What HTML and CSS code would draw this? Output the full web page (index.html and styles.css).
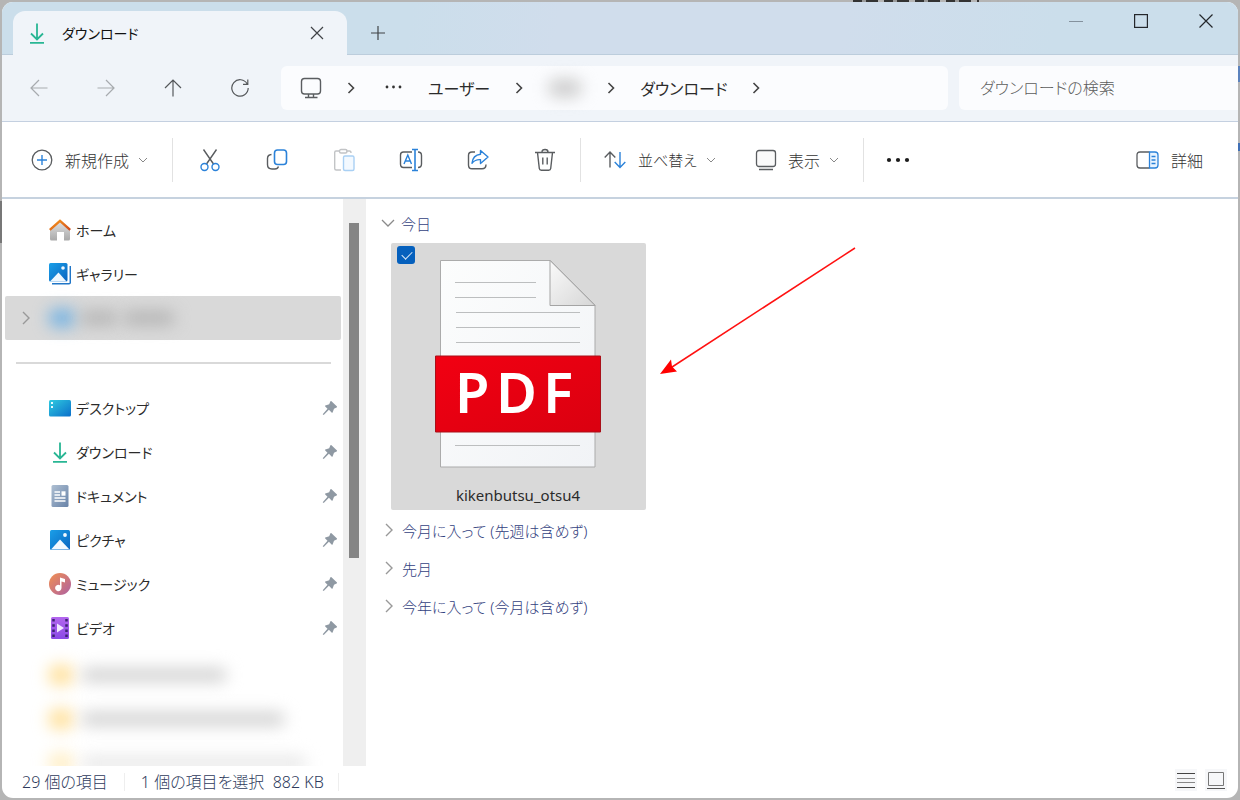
FILE: index.html
```html
<!DOCTYPE html>
<html lang="ja">
<head>
<meta charset="utf-8">
<meta name="viewport" content="width=device-width, initial-scale=1">
<title>ダウンロード</title>
<link rel="stylesheet" href="styles.css">
</head>
<body>
<svg class="defs" aria-hidden="true">
  <defs>
    <linearGradient id="g-green" x1="0" y1="0" x2="0" y2="1"><stop offset="0" stop-color="#22a699"/><stop offset="1" stop-color="#30c48d"/></linearGradient>
    <linearGradient id="g-blue" x1="0" y1="0" x2="1" y2="1"><stop offset="0" stop-color="#1a9fe8"/><stop offset="1" stop-color="#0a64c0"/></linearGradient>
    <linearGradient id="g-desk" x1="0" y1="0" x2="1" y2="1"><stop offset="0" stop-color="#2fcbe0"/><stop offset="1" stop-color="#0b6fca"/></linearGradient>
    <linearGradient id="g-house" x1="0" y1="0" x2="0" y2="1"><stop offset="0" stop-color="#e3e3e3"/><stop offset="1" stop-color="#a9a9a9"/></linearGradient>
    <linearGradient id="g-roof" x1="0" y1="0" x2="1" y2="1"><stop offset="0" stop-color="#f99a1c"/><stop offset="1" stop-color="#cf4a1c"/></linearGradient>
    <linearGradient id="g-doc" x1="0" y1="0" x2="1" y2="1"><stop offset="0" stop-color="#aebfd2"/><stop offset="1" stop-color="#6883a8"/></linearGradient>
    <linearGradient id="g-music" x1="0" y1="0" x2="1" y2="1"><stop offset="0" stop-color="#f29050"/><stop offset="1" stop-color="#ad60a3"/></linearGradient>
    <linearGradient id="g-video" x1="0" y1="0" x2="0" y2="1"><stop offset="0" stop-color="#b366ee"/><stop offset="1" stop-color="#8a4ae6"/></linearGradient>
    <linearGradient id="g-page" x1="0" y1="0" x2="1" y2="1"><stop offset="0" stop-color="#fcfdfd"/><stop offset="1" stop-color="#f1f3f6"/></linearGradient>
    <linearGradient id="g-fold" x1="0" y1="0" x2="1" y2="1"><stop offset="0" stop-color="#fafafa"/><stop offset="1" stop-color="#d6d6d6"/></linearGradient>
    <linearGradient id="g-red" x1="0" y1="0" x2="1" y2="1"><stop offset="0" stop-color="#f20012"/><stop offset="1" stop-color="#da0010"/></linearGradient>
  </defs>
  <symbol id="down" viewBox="0 0 10 6"><path d="M1 1l4 4 4-4" fill="none" stroke="currentColor"/></symbol>
  <symbol id="right" viewBox="0 0 8 14"><path d="M1 1l6 6-6 6" fill="none" stroke="currentColor" stroke-width="1.4"/></symbol>
  <symbol id="crumb" viewBox="0 0 10 12"><path d="M2.5 1l5 5-5 5" fill="none" stroke="currentColor" stroke-width="1.6"/></symbol>
  <symbol id="download" viewBox="0 0 22 22"><path d="M11 1.500V17M5 11.500l6 6 6-6M4 20.800h14" fill="none" stroke="#29b694" stroke-width="1.8"/></symbol>
  <symbol id="pin" viewBox="0 0 16 16"><path d="M9.200 1L15 6.500q.3.800-.5 1.100L12 8.700l-1.400 3.700q-.4.700-1 .1L6.900 9.800 1.700 15l-1-.8L5.500 8.700 3.200 6.400q-.5-.6.200-.9l3.800-1.200L8.300 1.400q.3-.7.900-.4z" fill="#8f99a3"/></symbol>
</svg>

<div class="window">
  <header class="titlebar">
    <div class="tab">
      <svg class="icon22" aria-hidden="true"><use href="#download"/></svg>
      <span class="tab-title">ダウンロード</span>
      <button class="plain tab-close" aria-label="タブを閉じる"><svg width="14" height="14" viewBox="0 0 14 14"><path d="M1 1l12 12M13 1L1 13" stroke="#404347" stroke-width="1.200"/></svg></button>
    </div>
    <button class="plain new-tab" aria-label="新しいタブ"><svg width="14" height="14" viewBox="0 0 14 14"><path d="M7 0v14M0 7h14" stroke="#404347" stroke-width="1.200"/></svg></button>
    <div class="caption">
      <button class="plain" aria-label="最小化"><svg width="14" height="14" viewBox="0 0 14 14"><path d="M0 7.500h14" stroke="#84919d"/></svg></button>
      <button class="plain" aria-label="最大化"><svg width="14" height="14" viewBox="0 0 14 14"><rect x=".6" y=".6" width="12.800" height="12.800" fill="none" stroke="#24272b" stroke-width="1.200"/></svg></button>
      <button class="plain" aria-label="閉じる"><svg width="14" height="14" viewBox="0 0 14 14"><path d="M.5.5l13 13M13.500.5l-13 13" stroke="#24272b" stroke-width="1.200"/></svg></button>
    </div>
  </header>

  <div class="address">
    <button class="plain go off" aria-label="戻る"><svg width="18" height="18" viewBox="0 0 18 18"><path d="M17.500 9H1M9 1L1 9l8 8"/></svg></button>
    <button class="plain go off" aria-label="進む"><svg width="18" height="18" viewBox="0 0 18 18"><path d="M.5 9H17M9 1l8 8-8 8"/></svg></button>
    <button class="plain go" aria-label="上へ"><svg width="18" height="18" viewBox="0 0 18 18"><path d="M9 17.500V1M1 9l8-8 8 8"/></svg></button>
    <button class="plain go" aria-label="更新"><svg width="18" height="18" viewBox="0 0 18 18"><path d="M16.200 5A8.200 8.200 0 1 0 17.200 9M16.800.5V5.300H12"/></svg></button>
    <nav class="crumbs" aria-label="パス">
      <svg width="22" height="22" viewBox="0 0 22 22" fill="none" stroke="#5a5d60" stroke-width="1.400"><rect x="1.500" y="1.500" width="19" height="15.500" rx="3"/><path d="M8.500 17v3M13.500 17v3M5 20.500h12.500"/></svg>
      <svg class="sep-c" aria-hidden="true"><use href="#crumb"/></svg>
      <svg width="24" height="6" viewBox="0 0 24 6" fill="#333"><circle cx="7" cy="2" r="1.400"/><circle cx="13.500" cy="2" r="1.400"/><circle cx="20" cy="2" r="1.400"/></svg>
      <a href="#">ユーザー</a>
      <svg class="sep-c" aria-hidden="true"><use href="#crumb"/></svg>
      <span class="blur-name"></span>
      <svg class="sep-c" aria-hidden="true"><use href="#crumb"/></svg>
      <a href="#">ダウンロード</a>
      <svg class="sep-c" aria-hidden="true"><use href="#crumb"/></svg>
    </nav>
    <input class="search" type="search" placeholder="ダウンロードの検索" aria-label="ダウンロードの検索">
  </div>

  <div class="toolbar">
    <button class="plain cmd"><svg width="22" height="22" viewBox="0 0 22 22" fill="none"><circle cx="11" cy="11" r="9.800" stroke="#5a5d60" stroke-width="1.300"/><path d="M11 6v10M6 11h10" stroke="#2b82d9" stroke-width="1.400"/></svg><span>新規作成</span><svg class="drop"><use href="#down"/></svg></button>
    <span class="rule"></span>
    <div class="tools">
      <button class="plain" aria-label="切り取り"><svg width="22" height="24" viewBox="0 0 22 24" fill="none" stroke-width="1.400"><path d="M4.500 1.500L14.500 16M17.500 1.500L7.500 16" stroke="#5a5d60"/><circle cx="5.500" cy="19" r="3.500" stroke="#2b82d9"/><circle cx="16.500" cy="19" r="3.500" stroke="#2b82d9"/></svg></button>
      <button class="plain" aria-label="コピー"><svg width="22" height="24" viewBox="0 0 22 24" fill="none" stroke-width="1.400"><path d="M5.500 6.500C3 6.700 1.500 8 1.500 10.500v6c0 3 1.500 4.500 4.500 4.500h3c2 0 3-1 3.500-2.500" stroke="#5a5d60"/><rect x="8.500" y="2" width="12" height="14.500" rx="3" stroke="#2b82d9" stroke-width="1.600"/></svg></button>
      <button class="plain" aria-label="貼り付け"><svg width="22" height="24" viewBox="0 0 22 24" fill="none" stroke-width="1.400"><path d="M7 3H3Q1.700 3 1.700 4.500v16q0 1.500 1.500 1.500H8M13 3h3.500Q18 3 18 5" stroke="#c2c4c6"/><rect x="6.500" y="1.500" width="7.500" height="3.500" rx="1.500" stroke="#c2c4c6"/><rect x="10.500" y="8" width="10.500" height="14.500" rx="1.500" fill="#f3f9ff" stroke="#a9d0f4"/></svg></button>
      <button class="plain" aria-label="名前の変更"><svg width="24" height="24" viewBox="0 0 24 24" fill="none" stroke-width="1.400"><path d="M13 4H4.500Q1.500 4 1.500 7v9q0 3.500 3 3.500H13M19 4q3.500 0 3.500 3.500v8.500q0 3.500-3.500 3.500" stroke="#5a5d60"/><path d="M16 1.500v21M13 1.500h6M13 22.500h6" stroke="#2b82d9" stroke-width="1.600"/><path d="M5 16L8.800 7l3.700 9M6.300 13h5" stroke="#2b82d9"/></svg></button>
      <button class="plain" aria-label="共有"><svg width="22" height="24" viewBox="0 0 22 24" fill="none" stroke-width="1.400"><path d="M8 4H5Q1.500 4 1.500 7.500v9.500q0 3.800 3.500 3.800h10q4 0 4-4.300" stroke="#5a5d60"/><path d="M13.500 2.500L21 9l-7.500 6.500v-3.800q-5-.5-8.500 3.500.800-8.200 8.500-9z" stroke="#2b82d9" stroke-linejoin="round"/></svg></button>
      <button class="plain" aria-label="削除"><svg width="22" height="24" viewBox="0 0 22 24" fill="none" stroke="#5a5d60" stroke-width="1.400"><path d="M1 4.500h20M8 4q0-2.500 3-2.500T14 4M3.500 4.500l1.800 16q.2 1.700 2 1.700h7.400q1.800 0 2-1.700l1.800-16M8.800 9.500v7M13.200 9.500v7"/></svg></button>
    </div>
    <span class="rule"></span>
    <button class="plain cmd sort"><svg width="22" height="20" viewBox="0 0 22 20" fill="none" stroke-width="1.400"><path d="M6 17.500V2M.7 7.500L6 2l5.300 5.500" stroke="#5a5d60"/><path d="M16 2v15.500M10.700 12l5.300 5.500L21.300 12" stroke="#2b82d9"/></svg><span>並べ替え</span><svg class="drop"><use href="#down"/></svg></button>
    <button class="plain cmd view"><svg width="22" height="22" viewBox="0 0 22 22" fill="none" stroke="#5a5d60" stroke-width="1.300"><rect x="1.500" y="1.500" width="19" height="16" rx="2.500" fill="#fafafa"/><path d="M4 20.500h14"/></svg><span>表示</span><svg class="drop"><use href="#down"/></svg></button>
    <span class="rule"></span>
    <button class="plain more" aria-label="その他"><svg width="24" height="6" viewBox="0 0 24 6" fill="#1c1c1c"><circle cx="3" cy="3" r="2.100"/><circle cx="12" cy="3" r="2.100"/><circle cx="21" cy="3" r="2.100"/></svg></button>
    <button class="plain cmd details"><svg width="23" height="18" viewBox="0 0 23 18" fill="none" stroke-width="1.300"><path d="M13.500 1H4Q1 1 1 4v10q0 3 3 3h9.500" stroke="#5a5d60"/><path d="M13.500 1H19q3 0 3 3v10q0 3-3 3h-5.500z" fill="#e9f4ff" stroke="#2b82d9"/><path d="M15.500 5.500h4M15.500 9h4M15.500 12.500h4" stroke="#2b82d9"/></svg><span>詳細</span></button>
  </div>

  <main class="main">
    <aside class="side">
      <nav class="tree" aria-label="ナビゲーション">
        <ul>
          <li><a href="#"><svg class="icon22" viewBox="0 0 22 22"><path d="M1 10.500L11 1.500l10 9V20q0 1.500-1.500 1.500H15V13H8v8.500H2.500Q1 21.500 1 20z" fill="url(#g-house)"/><path d="M.8 10.800L11 1.800l10.200 9" fill="none" stroke="url(#g-roof)" stroke-width="2.400"/></svg>ホーム</a></li>
          <li><a href="#"><svg class="icon22" viewBox="0 0 22 22"><path d="M3 20.800h17q1.300 0 1.300-1.300V3" fill="none" stroke="#2176c7" stroke-width="1.500"/><rect width="18.500" height="18.500" rx="1.500" fill="url(#g-blue)"/><path d="M1 18.500l8.500-9 8 9z" fill="#eff8ff"/><circle cx="14" cy="5" r="1.800" fill="#eff8ff"/></svg>ギャラリー</a></li>
          <li class="current"><a href="#" aria-label="アカウント"><svg class="expand" aria-hidden="true"><use href="#right"/></svg><span class="smudge cloud"></span><span class="smudge account"></span><span class="smudge account"></span></a></li>
        </ul>
        <hr>
        <ul class="pinned">
          <li><a href="#"><svg class="icon22" viewBox="0 0 22 22"><rect y="3" width="22" height="16.500" rx="1.500" fill="url(#g-desk)"/><path d="M2 5h2v2H2zM2 9h2v2H2z" fill="#e8fbff"/></svg>デスクトップ</a><svg class="pin"><use href="#pin"/></svg></li>
          <li><a href="#"><svg class="icon22"><use href="#download"/></svg>ダウンロード</a><svg class="pin"><use href="#pin"/></svg></li>
          <li><a href="#"><svg class="icon22" viewBox="0 0 22 22"><rect x="2.500" width="17" height="22" rx="1.500" fill="url(#g-doc)"/><path d="M5.500 7h5.500M5.500 10h5.500M5.500 13h11M5.500 16h11" stroke="#fff" stroke-width="1.400"/><path d="M12.500 6.300h4v4.400h-4z" fill="#fff"/></svg>ドキュメント</a><svg class="pin"><use href="#pin"/></svg></li>
          <li><a href="#"><svg class="icon22" viewBox="0 0 22 22"><rect x="1" y="1" width="20" height="20" rx="1.500" fill="url(#g-blue)"/><path d="M2 20.500l9-10 9.500 10z" fill="#f3f9ff"/><circle cx="16" cy="6" r="1.900" fill="#f3f9ff"/></svg>ピクチャ</a><svg class="pin"><use href="#pin"/></svg></li>
          <li><a href="#"><svg class="icon22" viewBox="0 0 22 22"><circle cx="11" cy="11" r="11" fill="url(#g-music)"/><path d="M11 4.500l5 1.500v3.500l-3.500-1V15a3.200 3.200 0 1 1-1.500-2.700z" fill="#fff"/></svg>ミュージック</a><svg class="pin"><use href="#pin"/></svg></li>
          <li><a href="#"><svg class="icon22" viewBox="0 0 22 22"><rect x="2" width="18" height="22" rx="1.500" fill="url(#g-video)"/><path d="M4.500 2v19M17.500 2v19" stroke="#3c2372" stroke-width="2.500" stroke-dasharray="2.500 2.700"/><path d="M8 6.500l7 4.500-7 4.500z" fill="#f1e8ff"/></svg>ビデオ</a><svg class="pin"><use href="#pin"/></svg></li>
        </ul>
        <ul class="recent" aria-hidden="true">
          <li><span class="smudge folder"></span><span class="smudge name name-1"></span></li>
          <li><span class="smudge folder"></span><span class="smudge name name-2"></span></li>
          <li><span class="smudge folder faint"></span><span class="smudge name name-3"></span></li>
        </ul>
      </nav>
      <div class="track"><div class="thumb"></div></div>
    </aside>

    <section class="files">
      <button class="plain group open"><svg width="14" height="9" viewBox="0 0 14 9"><path d="M1 1l6 6 6-6" fill="none" stroke="#8a8a8a" stroke-width="1.300"/></svg>今日</button>
      <div class="file">
        <input class="pick" type="checkbox" id="pick" checked>
        <label class="file-label" for="pick">
          <svg width="168" height="208" viewBox="0 0 168 208" aria-hidden="true">
            <path d="M6.500.5h110L161 45v162H6.500z" fill="url(#g-page)" stroke="#ababab"/>
            <path d="M116 .5V45.500h45z" fill="url(#g-fold)" stroke="#a4a4a4"/>
            <path d="M21 22.500h81M21 37.500h81M22 52.500h124M22 67.500h124M22 82.500h124M21 185.500h125" stroke="#bcbebf"/>
            <path d="M1.500 96h165v76H1.500z" fill="url(#g-red)" stroke="#a91019"/>
            <text class="pdf" x="21 62 109" y="153">PDF</text>
          </svg>
          <span>kikenbutsu_otsu4</span>
        </label>
      </div>
      <button class="plain group"><svg class="expand"><use href="#right"/></svg>今月に入って (先週は含めず)</button>
      <button class="plain group"><svg class="expand"><use href="#right"/></svg>先月</button>
      <button class="plain group"><svg class="expand"><use href="#right"/></svg>今年に入って (今月は含めず)</button>
      <svg class="arrow" width="198" height="132" viewBox="0 0 198 132" aria-hidden="true"><path d="M196 2L10 123" stroke="#f11" stroke-width="1.500"/><path d="M1 128L12 113.500l1 7 5 5z" fill="#f00"/></svg>
    </section>
  </main>

  <footer class="status">
    <span class="count">29 個の項目</span>
    <span class="picked">1 個の項目を選択&nbsp; 882 KB</span>
    <div class="modes">
      <button class="plain" aria-label="詳細表示"><svg width="18" height="18" viewBox="0 0 18 18" fill="none"><path d="M0 2.500h18M0 16.500h18" stroke="#444"/><path d="M0 7.500h18M0 11.500h18" stroke="#888"/></svg></button>
      <button class="plain" aria-label="大アイコン表示"><svg width="18" height="18" viewBox="0 0 18 18" fill="none"><path d="M1.500 1.500h15v13h-15z" stroke="#777"/><path d="M0 17.500h18" stroke="#555"/></svg></button>
    </div>
  </footer>
</div>
</body>
</html>
```
FILE: styles.css
```css
* { box-sizing: border-box; }

body {
  margin: 0;
  height: 100vh;
  padding: 2px;
  overflow: hidden;
  background:
    repeating-linear-gradient(90deg, #333 0 9px, #999 9px 13px, #333 13px 25px, #b5b5b5 25px 31px) 853px 0 / 126px 2px no-repeat,
    linear-gradient(#5b82bd, #5b82bd) 100% 66px / 2px 16px no-repeat,
    linear-gradient(#3f6fb5, #3f6fb5) 100% 143px / 2px 8px no-repeat,
    linear-gradient(#777, #777) 0 201px / 2px 42px no-repeat,
    #b5b5b5;
  font-family: "Noto Sans", "Noto Sans CJK JP", sans-serif;
  font-size: 16px;
  font-weight: 300;
  font-feature-settings: "palt";
  color: #2b2b2b;
}

svg { flex: none; display: block; }
a { color: inherit; text-decoration: none; }
ul { list-style: none; margin: 0; padding: 0; }
.defs { position: absolute; width: 0; height: 0; }

.plain {
  display: flex;
  align-items: center;
  justify-content: center;
  padding: 0;
  border: 0;
  background: none;
  font: inherit;
  font-feature-settings: inherit;
  color: inherit;
}

.icon22 { width: 22px; height: 22px; }
.expand { width: 8px; height: 14px; color: #999; }

.window {
  display: flex;
  flex-direction: column;
  height: 100%;
  border-radius: 11px;
  overflow: hidden;
  background: #fff;
}

/* Title bar */
.titlebar {
  display: flex;
  flex: none;
  height: 53px;
  padding-left: 11px;
  border-bottom: 1px solid #bccddc;
  background: linear-gradient(100deg, #cbdeeb 0%, #cbdeeb 33%, #d0ddec 45%, #d0ddec 68%, #cbdeeb 85%);
}
.tab {
  display: flex;
  align-items: center;
  width: 334px;
  height: 44px;
  margin-top: 9px;
  padding: 0 23px 0 13px;
  border-radius: 12px 12px 0 0;
  background: #f0f4f9;
}
.tab-title { margin-left: 14px; font-size: 14px; font-weight: 400; color: #111; }
.tab-close { margin-left: auto; }
.new-tab { width: 32px; height: 44px; margin: 9px 0 0 15px; }
.caption { display: flex; height: 38px; margin-left: auto; }
.caption .plain { width: 65px; }

/* Address row */
.address {
  display: flex;
  flex: none;
  height: 67px;
  padding: 11px 0 11px 4px;
  border-bottom: 1px solid #c4d0e0;
  background: #f0f4f9;
}
.go { width: 67px; padding-right: 2px; fill: none; stroke: #55585b; stroke-width: 1.2; }
.off { padding-right: 1px; stroke: #a7abaf; }
.crumbs {
  display: flex;
  flex: 1;
  align-items: center;
  gap: 24px;
  margin: 0 11px 0 7px;
  padding-left: 19px;
  border-radius: 6px;
  background: #fbfcfe;
  font-weight: 400;
  white-space: nowrap;
}
.sep-c { width: 10px; height: 12px; color: #444; }
.blur-name { width: 34px; height: 18px; border-radius: 9px; background: #ccc; filter: blur(8px); }
.search {
  width: 279px;
  padding: 0 21px;
  border: 0;
  border-radius: 6px 0 0 6px;
  background: #fbfcfe;
  font: inherit;
  font-feature-settings: inherit;
}
.search::placeholder { color: #5c5c5c; opacity: 1; }

/* Command bar */
.toolbar {
  display: flex;
  flex: none;
  align-items: center;
  height: 77px;
  padding: 0 35px 0 29px;
  border-bottom: 2px solid #c6d2df;
  white-space: nowrap;
}
.cmd { color: #333; }
.cmd span { margin-left: 12px; }
.drop { width: 10px; height: 6px; margin-left: 9px; color: #888; }
.rule { width: 1px; height: 44px; background: #e2e2e2; }
.cmd + .rule { margin-left: 24px; }
.tools { display: flex; margin: 0 2px 0 3px; }
.tools .plain { width: 67px; height: 44px; }
.sort { margin-left: 23px; }
.sort span { font-size: 15px; }
.view { margin-left: 39px; }
.view span { margin-left: 11px; }
.more { margin-left: 22px; }
.details { margin-left: auto; }

/* Body */
.main { display: flex; flex: 1; min-height: 0; }
.side { display: flex; flex: none; width: 364px; }
.tree { flex: 1; padding: 9px 2px 0 3px; overflow: hidden; font-size: 14px; }
.tree li { display: flex; align-items: center; height: 44px; padding: 0 3px 0 44px; }
.tree a { display: flex; flex: 1; align-items: center; gap: 5px; font-weight: 400; }
.tree .current { padding-left: 17px; border-radius: 2px; background: #d9d9d9; }
.tree hr { height: 2px; margin: 22px 10px 0 11px; border: 0; background: #d9d9d9; }
.pinned { margin-top: 22px; }
.pin { width: 16px; height: 16px; }
.recent { margin-top: 3px; }

.smudge { height: 14px; border-radius: 7px; filter: blur(8px); background: #d2d2d2; }
.cloud { width: 26px; height: 18px; margin-left: 14px; background: #74b2e2; }
.account { width: 38px; background: #b4b4b4; }
.account + .account { width: 52px; }
.folder { width: 24px; height: 20px; background: #ffe09a; }
.faint { background: #ffeec4; }
.name { margin-left: 8px; }
.name-1 { width: 146px; }
.name-2 { width: 204px; }
.name-3 { width: 226px; background: #e8e8e8; }

.track { width: 23px; padding: 24px 7px 0 6px; background: #efefef; }
.thumb { height: 335px; background: #858585; }

.files { position: relative; flex: 1; padding: 6px 0 0 17px; font-size: 15px; }
.group { justify-content: flex-start; height: 38px; gap: 9px; padding: 0 0 2px 2px; color: #33417e; }
.group.open { gap: 6px; padding-left: 0; margin-left: -2px; }
.file {
  position: relative;
  width: 255px;
  margin: 0 0 2px 8px;
  padding: 17px 0 3px;
  border-radius: 2px;
  background: #d9d9d9;
}
.file-label { display: flex; flex-direction: column; align-items: center; gap: 16px; padding-right: 1px; font-weight: 400; line-height: 23px; }
.pdf { fill: #fff; font-family: "Noto Sans", sans-serif; font-size: 56px; font-weight: 600; }
.pick {
  position: absolute;
  top: 3px;
  left: 6px;
  width: 18px;
  height: 18px;
  margin: 0;
  appearance: none;
  border-radius: 3px;
  background: #0560bd;
}
.pick::after {
  content: "";
  position: absolute;
  top: 5px;
  left: 5px;
  width: 9px;
  height: 5px;
  border: solid #d8e8f8;
  border-width: 0 0 1px 1px;
  transform: rotate(-45deg);
}
.arrow { position: absolute; top: 47px; left: 293px; }

/* Status bar */
.status { display: flex; flex: none; align-items: center; height: 32px; padding: 0 11px 0 20px; color: #2e3a5c; white-space: nowrap; }
.count { padding-right: 16px; border-right: 1px solid #eee; line-height: 18px; }
.picked { padding: 0 14px 0 16px; border-right: 1px solid #eee; line-height: 18px; }
.modes { display: flex; gap: 8px; margin-left: auto; padding-bottom: 4px; }
.modes .plain { width: 22px; height: 22px; background: #f6f7f9; }
```
